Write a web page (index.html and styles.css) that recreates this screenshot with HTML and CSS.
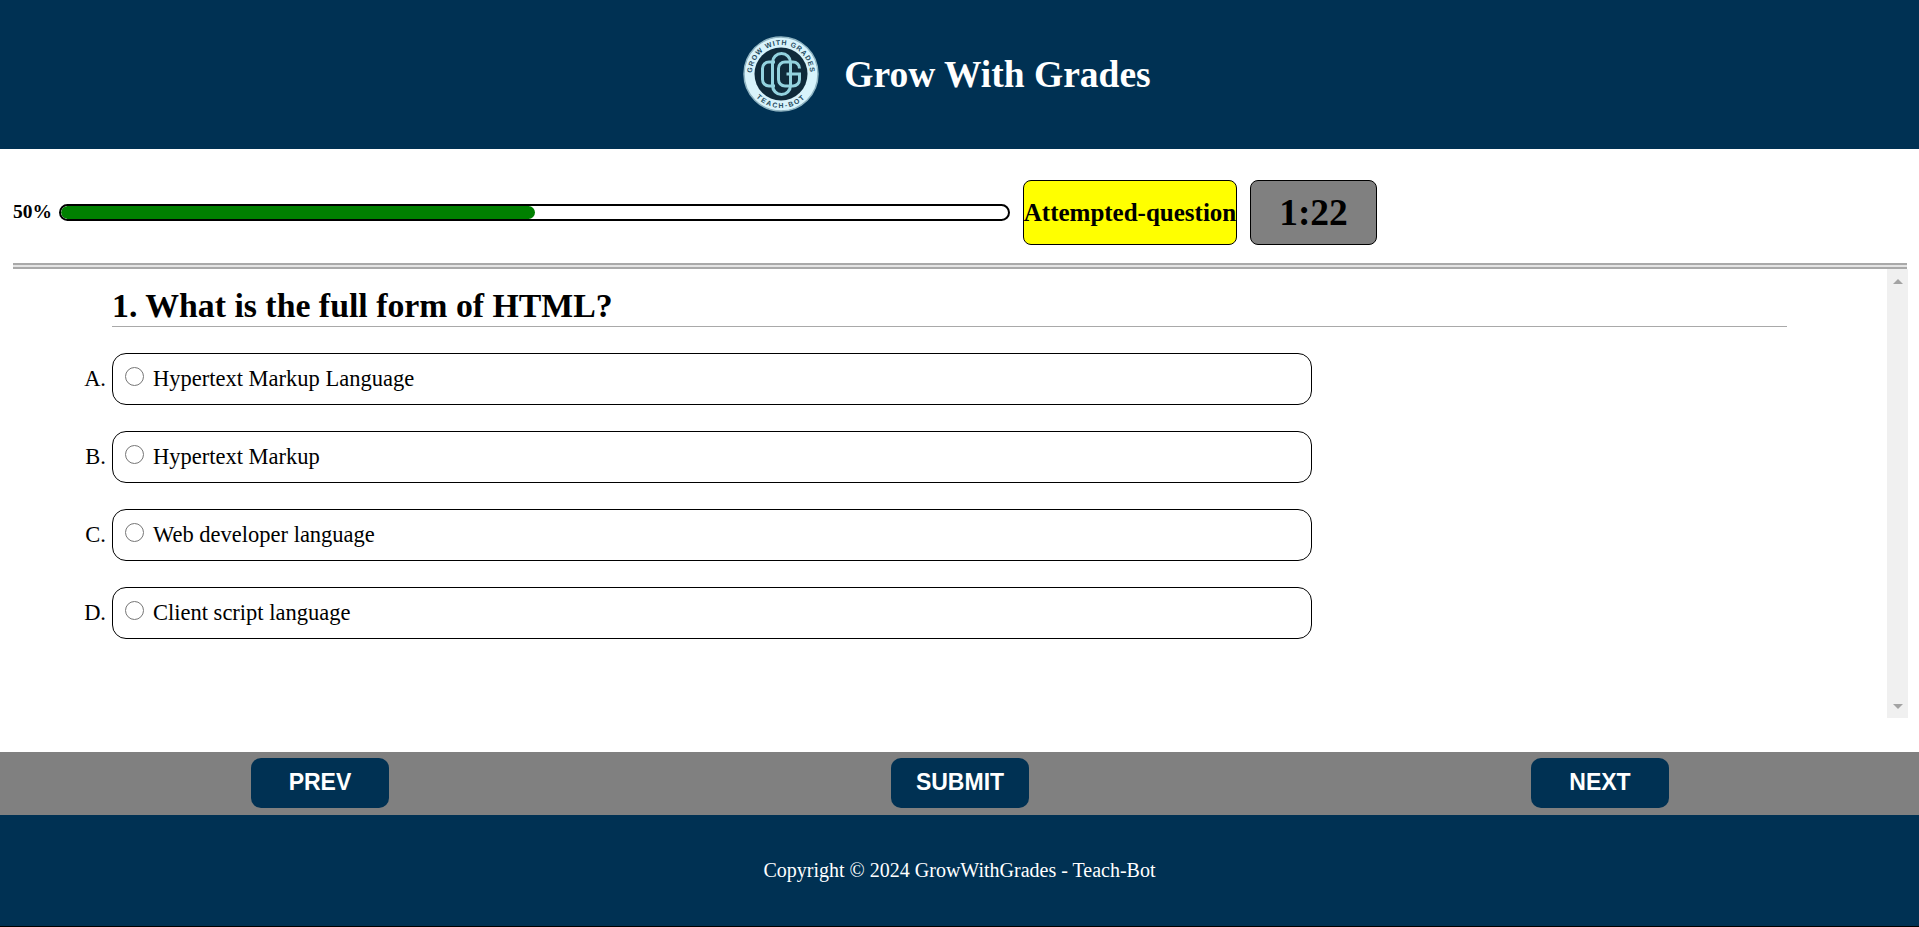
FILE: index.html
```html
<!DOCTYPE html>
<html lang="en">
<head>
    <meta charset="UTF-8">
    <meta name="viewport" content="width=device-width, initial-scale=1.0">
    <title>Grow With Grades</title>
    <link rel="stylesheet" href="styles.css">
</head>
<body>

<header class="site-header">
    <svg class="logo" viewBox="0 0 76 76" aria-hidden="true">
        <defs>
            <path id="arcTop" d="M9 38a29 29 0 0 1 58 0"/>
            <path id="arcBottom" d="M4 38a34 34 0 0 0 68 0"/>
        </defs>
        <circle cx="38" cy="38" r="37" fill="#d8f3fb" stroke="#8fb4c2" stroke-width="1.500"/>
        <circle cx="38" cy="38" r="26.500" fill="#0f2a3a"/>
        <text class="logo-text"><textPath href="#arcTop" startOffset="50%" text-anchor="middle">GROW WITH GRADES</textPath></text>
        <text class="logo-text logo-text-wide"><textPath href="#arcBottom" startOffset="50%" text-anchor="middle">TEACH-BOT</textPath></text>
        <g fill="none" stroke="#93d2de" stroke-width="3">
            <path d="M32 26h-6a6.500 6.500 0 0 0-6.500 6.500v11a6.500 6.500 0 0 0 6.500 6.500h6"/>
            <rect x="29.500" y="17.500" width="18" height="41" rx="9"/>
            <path d="M56.500 32.500a6.500 6.500 0 0 0-6.500-6.500h-8a6.500 6.500 0 0 0-6.500 6.500v11a6.500 6.500 0 0 0 6.500 6.500h8a6.500 6.500 0 0 0 6.500-6.500v-5.500h-13"/>
        </g>
    </svg>
    <h1 class="site-title">Grow With Grades</h1>
</header>

<section class="status-row">
    <span class="progress-label">50%</span>
    <div class="progress-bar"><div class="progress-fill" style="width: 50%"></div></div>
    <div class="badge badge-attempted">Attempted-question</div>
    <div class="badge badge-timer">1:22</div>
</section>

<hr class="divider">

<main class="question-area">
    <div class="question-scroll">
        <h2 class="question-title">1. What is the full form of HTML?</h2>
        <ul class="options">
            <li class="option">
                <span class="option-letter">A.</span>
                <label class="option-box"><input type="radio" name="q1"> Hypertext Markup Language</label>
            </li>
            <li class="option">
                <span class="option-letter">B.</span>
                <label class="option-box"><input type="radio" name="q1"> Hypertext Markup</label>
            </li>
            <li class="option">
                <span class="option-letter">C.</span>
                <label class="option-box"><input type="radio" name="q1"> Web developer language</label>
            </li>
            <li class="option">
                <span class="option-letter">D.</span>
                <label class="option-box"><input type="radio" name="q1"> Client script language</label>
            </li>
        </ul>
    </div>
    <div class="scroll-track">
        <span class="arrow-up"></span>
        <span class="arrow-down"></span>
    </div>
</main>

<nav class="button-bar">
    <button class="nav-btn">PREV</button>
    <button class="nav-btn">SUBMIT</button>
    <button class="nav-btn">NEXT</button>
</nav>

<footer class="site-footer">
    <p>Copyright © 2024 GrowWithGrades - Teach-Bot</p>
</footer>

</body>
</html>
```

FILE: styles.css
```css
:root {
    --navy: #003153;
    --grey: #808080;
    --rule: #a9a9a9;
}

* {
    box-sizing: border-box;
}

body {
    margin: 0;
    height: 927px;
    overflow: hidden;
    font-family: "Liberation Serif", serif;
    color: #000;
    background-color: #fff;
}

.site-header {
    height: 149px;
    padding-right: 25px;
    background-color: var(--navy);
    display: flex;
    align-items: center;
    justify-content: center;
    gap: 25px;
}

.logo {
    width: 76px;
    height: 76px;
    margin-bottom: 1px;
}

.logo-text {
    font-family: "Liberation Sans", sans-serif;
    font-size: 7px;
    font-weight: bold;
    letter-spacing: 0.900px;
    fill: #1f4a5e;
}

.logo-text-wide {
    letter-spacing: 1.600px;
}

.site-title {
    margin: 0;
    font-size: 37.500px;
    font-weight: bold;
    color: #fff;
}

.status-row {
    height: 115px;
    padding: 31px 0 0 13px;
    display: flex;
    align-items: flex-start;
}

.progress-label {
    width: 46px;
    height: 65px;
    font-size: 19.500px;
    font-weight: bold;
    line-height: 64px;
}

.progress-bar {
    width: 951px;
    height: 17px;
    margin-top: 24px;
    border: 2px solid #000;
    border-radius: 9px;
    overflow: hidden;
}

.progress-fill {
    height: 100%;
    background-color: #008000;
    border-radius: 7px;
}

.badge {
    height: 65px;
    border: 1px solid #000;
    border-radius: 8px;
    display: flex;
    align-items: center;
    justify-content: center;
    font-weight: bold;
    white-space: nowrap;
}

.badge-attempted {
    width: 214px;
    margin-left: 13px;
    background-color: #ff0;
    font-size: 25px;
}

.badge-timer {
    width: 127px;
    margin-left: 13px;
    background-color: var(--grey);
    font-size: 37.500px;
}

.divider {
    height: 6px;
    margin: -1px 12px 0 13px;
    border: none;
    border-top: 2px solid var(--rule);
    border-bottom: 2px solid var(--rule);
    background-color: #e4e4e4;
}

.question-area {
    height: 449px;
    padding-right: 11px;
    display: flex;
}

.question-scroll {
    flex: 1;
    padding: 20px 100px 0 112px;
}

.question-title {
    margin: 0;
    height: 38px;
    font-size: 33.800px;
    line-height: 34px;
    font-weight: bold;
    border-bottom: 1px solid var(--rule);
}

.options {
    list-style: none;
    margin: 26px 0 0 -112px;
    padding: 0;
}

.option {
    display: flex;
    align-items: center;
    margin-bottom: 26px;
}

.option-letter {
    width: 112px;
    padding-right: 6px;
    text-align: right;
    font-size: 22.500px;
}

.option-box {
    width: 1200px;
    height: 52px;
    padding-left: 12px;
    border: 1px solid #000;
    border-radius: 14px;
    display: flex;
    align-items: center;
    gap: 9px;
    font-size: 22.500px;
}

.option-box input {
    width: 19px;
    height: 19px;
    margin: 0 0 5px;
}

.scroll-track {
    width: 21px;
    background-color: #f0f0f0;
    display: flex;
    flex-direction: column;
    justify-content: space-between;
    align-items: center;
    padding: 10px 0 9px;
}

.arrow-up,
.arrow-down {
    width: 0;
    height: 0;
    border-left: 5px solid transparent;
    border-right: 5px solid transparent;
}

.arrow-up {
    border-bottom: 5px solid #a3a3a3;
}

.arrow-down {
    border-top: 5px solid #a3a3a3;
}

.button-bar {
    height: 63px;
    margin-top: 34px;
    background-color: var(--grey);
    display: flex;
    align-items: flex-start;
    justify-content: space-between;
    padding: 6px 250px 0 251px;
}

.nav-btn {
    width: 138px;
    height: 50px;
    padding-bottom: 2px;
    border: none;
    border-radius: 10px;
    background-color: var(--navy);
    color: #fff;
    font-family: "Liberation Sans", sans-serif;
    font-size: 23px;
    font-weight: bold;
}

.site-footer {
    height: 112px;
    padding-bottom: 1px;
    background-color: var(--navy);
    border-bottom: 1px solid #000;
    display: flex;
    align-items: center;
    justify-content: center;
    color: #fff;
    font-size: 20px;
}

.site-footer p {
    margin: 0;
}
```
